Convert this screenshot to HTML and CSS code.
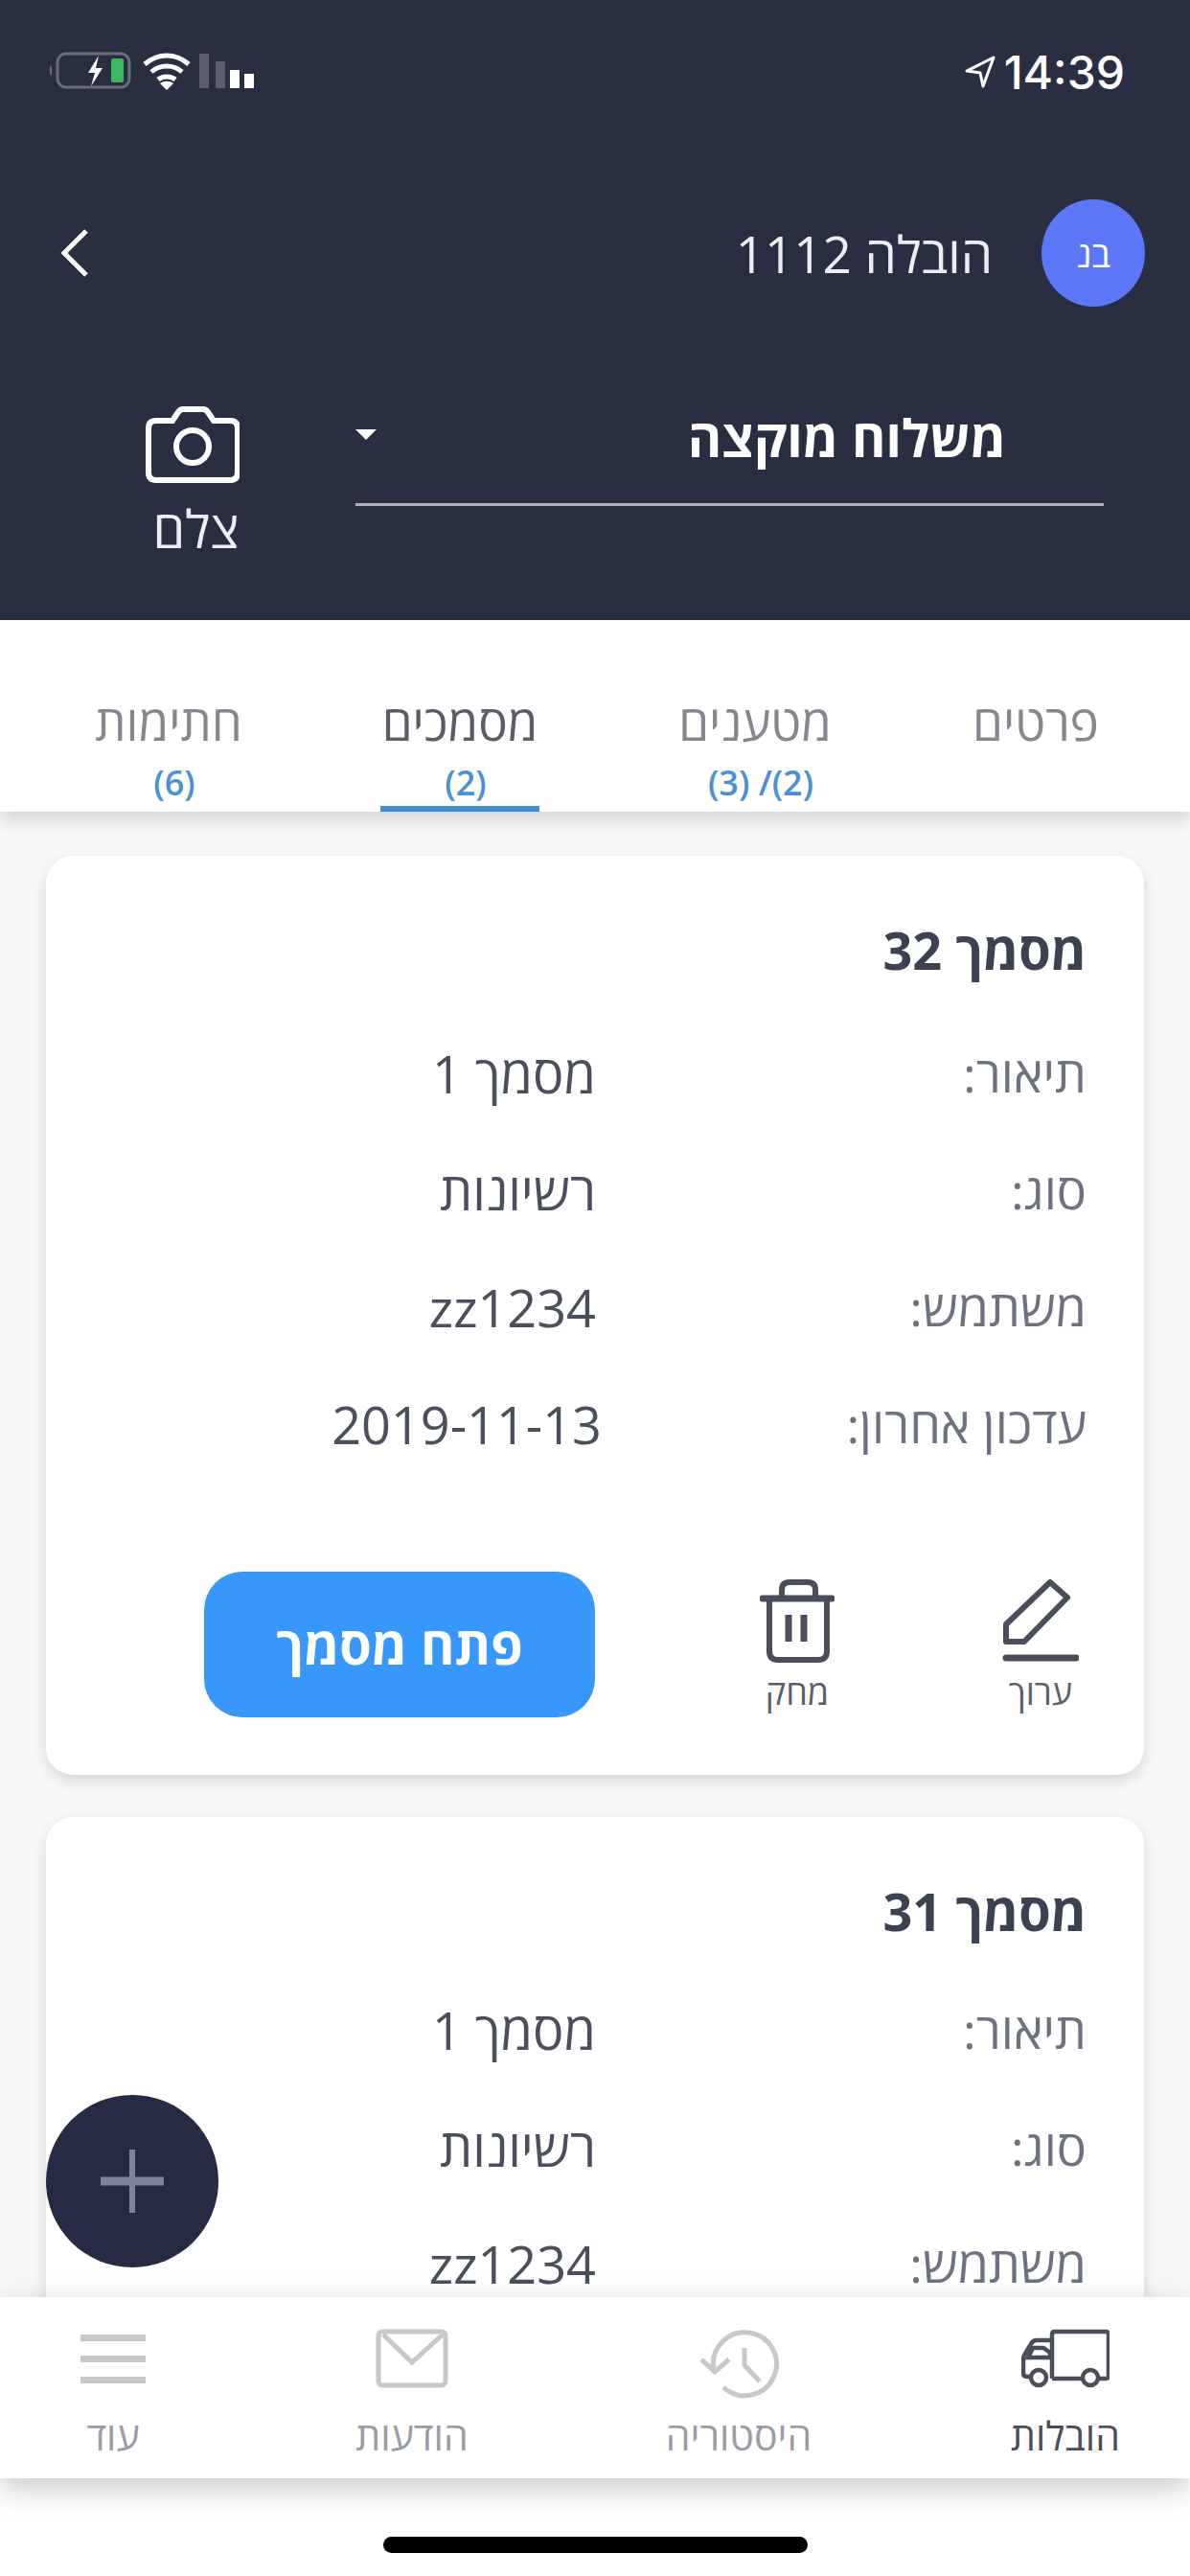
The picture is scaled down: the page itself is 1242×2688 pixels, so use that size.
FILE: index.html
```html
<!DOCTYPE html>
<html lang="he" dir="rtl">
  <head>
    <meta charset="utf-8">
    <link rel="stylesheet" href="styles.css">
    <title>הובלה 1112</title>
  </head>
  <body>
    <div class="screen">
      <header class="top">
        <div class="status">
          <div class="clock">
            <span>14:39</span>
            <svg width="34" height="36" viewBox="0 0 34 36"><path d="M31 3 3 17l14 2 3 14z" fill="none" stroke="#fff" stroke-width="3" stroke-linejoin="round"/></svg>
          </div>
          <svg class="status-icons" width="216" height="44" viewBox="0 0 216 44">
            <rect x="8" y="3" width="75" height="35" rx="9" fill="none" stroke="#686c7c" stroke-width="3"/>
            <path d="M2 15v11l-2-2v-7z" fill="#686c7c"/>
            <rect x="64" y="8" width="13" height="25" rx="2" fill="#3cb95c"/>
            <path d="M51 5 40 23h7l-4 14 12-19h-7z" fill="#fff"/>
            <path d="M99 14c14-12 32-12 46 0M106 22c9-8 23-8 32 0M113 30c5-4 13-4 18 0" fill="none" stroke="#fff" stroke-width="5"/>
            <path d="M122 41l-7-7c4-3 10-3 14 0z" fill="#fff"/>
            <rect x="156" y="3" width="10" height="36" fill="#5a5e6e"/>
            <rect x="173" y="11" width="10" height="28" fill="#5a5e6e"/>
            <rect x="188" y="20" width="10" height="19" fill="#fff"/>
            <rect x="203" y="24" width="10" height="15" fill="#fff"/>
          </svg>
        </div>
        <div class="title-row">
          <div class="avatar">בנ</div>
          <div class="title">הובלה 1112</div>
          <svg class="back" width="32" height="52" viewBox="0 0 32 52"><path d="M28 3 5 26l23 23" fill="none" stroke="#fff" stroke-width="5"/></svg>
        </div>
        <div class="select-row">
          <div class="select">
            <span class="select-text">משלוח מוקצה</span>
            <span class="select-arrow"></span>
          </div>
          <div class="camera">
            <svg width="98" height="80" viewBox="0 0 98 80"><path d="M3 23q0-8 8-8h17l6-9q2-3 5-3h21q3 0 5 3l6 9h17q8 0 8 8v46q0 8-8 8H11q-8 0-8-8z" fill="none" stroke="#fff" stroke-width="6"/><circle cx="49" cy="42" r="17" fill="none" stroke="#fff" stroke-width="6"/></svg>
            <span>צלם</span>
          </div>
        </div>
      </header>

      <nav class="tabs">
        <div class="tab"><span class="tab-name">פרטים</span></div>
        <div class="tab"><span class="tab-name">מטענים</span><span class="tab-count">(2)/ (3)</span></div>
        <div class="tab active"><span class="tab-name">מסמכים</span><span class="tab-count">(2)</span></div>
        <div class="tab"><span class="tab-name">חתימות</span><span class="tab-count">(6)</span></div>
      </nav>

      <main class="list">
        <section class="card">
          <h2>מסמך 32</h2>
          <div class="row"><span class="key">תיאור:</span><span class="val">מסמך 1</span></div>
          <div class="row"><span class="key">סוג:</span><span class="val">רשיונות</span></div>
          <div class="row"><span class="key">משתמש:</span><span class="val">zz1234</span></div>
          <div class="row"><span class="key">עדכון אחרון:</span><span class="val date">2019-11-13</span></div>
          <div class="actions">
            <div class="action edit">
              <svg width="80" height="88" viewBox="0 0 80 88"><path d="M50 3 68 19 23 65H4V47z" fill="none" stroke="#4a4e5a" stroke-width="6" stroke-linejoin="round"/><path d="M4 82h73" stroke="#4a4e5a" stroke-width="7" stroke-linecap="round"/></svg>
              <span>ערוך</span>
            </div>
            <div class="action trash">
              <svg width="78" height="88" viewBox="0 0 78 88"><path d="M3 20h72" stroke="#4a4e5a" stroke-width="7" stroke-linecap="round"/><path d="M23 18V11q0-8 8-8h19q8 0 8 8v7" fill="none" stroke="#4a4e5a" stroke-width="6"/><path d="M10 20v55q0 9 9 9h42q9 0 9-9V20" fill="none" stroke="#4a4e5a" stroke-width="6"/><path d="M30 37v28M46 37v28" stroke="#4a4e5a" stroke-width="7"/></svg>
              <span>מחק</span>
            </div>
            <button class="open">פתח מסמך</button>
          </div>
        </section>
        <section class="card short">
          <h2>מסמך 31</h2>
          <div class="row"><span class="key">תיאור:</span><span class="val">מסמך 1</span></div>
          <div class="row"><span class="key">סוג:</span><span class="val">רשיונות</span></div>
          <div class="row"><span class="key">משתמש:</span><span class="val">zz1234</span></div>
        </section>
      </main>

      <button class="fab">
        <svg width="66" height="66" viewBox="0 0 66 66"><path d="M0 33h66" stroke="#7d8499" stroke-width="9"/><path d="M33 0v66" stroke="#7d8499" stroke-width="6"/></svg>
      </button>

      <footer class="bottom">
        <div class="nav-item current">
          <div class="nav-icon"><svg width="92" height="62" viewBox="0 0 92 62"><g fill="none" stroke="#4a4e5a" stroke-width="4.5"><path d="M32 52V6q0-3 3-3h53q3 0 3 3v43q0 3-3 3h-8M64 52H32"/><circle cx="72" cy="51" r="8"/><circle cx="18" cy="51" r="8"/><path d="M10 50H6q-4 0-4-4V32q0-3 2-6l6-10q2-4 6-4h16"/><path d="M7 30l5-10h11l7 5v5z"/></g></svg></div>
          <span>הובלות</span>
        </div>
        <div class="nav-item">
          <div class="nav-icon"><svg width="84" height="74" viewBox="0 0 84 74"><g fill="none" stroke="#c8c8c8" stroke-width="5"><path d="M16 43A33 33 0 1 1 26 61"/><path d="M3 32l14 13 15-13"/><path d="M48 20v18l16 17"/></g></svg></div>
          <span>היסטוריה</span>
        </div>
        <div class="nav-item">
          <div class="nav-icon"><svg width="76" height="62" viewBox="0 0 76 62"><g fill="none" stroke="#c8c8c8" stroke-width="5"><rect x="3" y="3" width="70" height="56" rx="4"/><path d="M8 6l30 29L70 6"/></g></svg></div>
          <span>הודעות</span>
        </div>
        <div class="nav-item">
          <div class="nav-icon"><div class="burger"><i></i><i></i><i></i></div></div>
          <span>עוד</span>
        </div>
      </footer>

      <div class="home-area"><div class="home-bar"></div></div>
    </div>
  </body>
</html>
```

FILE: styles.css
```css
html, body {
  margin: 0;
  padding: 0;
}
body {
  font-family: "Open Sans", "Liberation Sans", sans-serif;
  background: #fff;
}
.screen {
  position: relative;
  width: 1242px;
  height: 2688px;
  overflow: hidden;
  display: flex;
  flex-direction: column;
}

/* header */
.top {
  background: #2a2e42;
  height: 647px;
  color: #fff;
  flex: none;
}
.status {
  height: 150px;
  display: flex;
  justify-content: space-between;
  align-items: center;
  padding: 0 68px 0 52px;
}
.clock {
  display: flex;
  align-items: center;
  gap: 8px;
  font-family: Inter, sans-serif;
  font-size: 48px;
  font-weight: 500;
}
.title-row {
  height: 116px;
  margin-top: 56px;
  padding: 0 47px 0 62px;
  display: flex;
  align-items: center;
}
.avatar {
  width: 108px;
  height: 112px;
  border-radius: 50%;
  background: #5b76f7;
  font-size: 38px;
  display: flex;
  align-items: center;
  justify-content: center;
}
.title {
  font-size: 53px;
  margin-right: 51px;
  color: #eceef2;
}
.back {
  margin-right: auto;
}
.select-row {
  margin-top: 75px;
  padding: 0 90px 0 152px;
  display: flex;
  justify-content: space-between;
  align-items: flex-start;
}
.select {
  width: 679px;
  height: 118px;
  padding-bottom: 10px;
  padding-right: 102px;
  border-bottom: 3px solid #b2b2bc;
  display: flex;
  justify-content: space-between;
  align-items: center;
}
.select-text {
  font-size: 54px;
  font-weight: 700;
}
.select-arrow {
  width: 0;
  height: 0;
  border-top: 11px solid #fff;
  border-left: 11px solid transparent;
  border-right: 11px solid transparent;
  margin-bottom: 6px;
}
.camera {
  display: flex;
  flex-direction: column;
  align-items: center;
  margin-top: 27px;
  font-size: 54px;
  line-height: 66px;
  gap: 14px;
  color: #eceef2;
}
.camera span {
  margin-left: 7px;
}

/* tabs */
.tabs {
  position: relative;
  z-index: 2;
  flex: none;
  height: 200px;
  padding: 0 15px 0 33px;
  display: grid;
  grid-template-columns: 292px 294px 322px 286px;
  background: #fff;
  box-shadow: 0 8px 16px rgba(0, 0, 0, 0.14);
}
.tab {
  display: flex;
  flex-direction: column;
  align-items: center;
  padding-top: 76px;
}
.tab-name {
  font-size: 51px;
  line-height: 60px;
  color: #85878f;
}
.tab-count {
  font-size: 36px;
  font-weight: 600;
  line-height: 40px;
  margin-top: 14px;
  margin-left: 12px;
  color: #4a90d2;
}
.tab.active {
  position: relative;
}
.tab.active .tab-name {
  color: #5b5d66;
}
.tab.active::after {
  content: "";
  position: absolute;
  bottom: 0;
  left: 50%;
  width: 166px;
  margin-left: -83px;
  height: 6px;
  background: #3f8fd8;
}

/* cards */
.list {
  flex: 1;
  min-height: 0;
  background: #f6f7f9;
  padding: 46px 48px 0;
}
.card {
  background: #fff;
  border-radius: 28px;
  box-shadow: 0 6px 14px rgba(0, 0, 0, 0.13);
  padding: 66px 60px 60px 62px;
  margin-bottom: 44px;
}
.card h2 {
  margin: 0 0 36px;
  font-size: 54px;
  line-height: 64px;
  font-weight: 700;
  color: #3d4252;
}
.card.short h2 {
  margin-bottom: 31px;
}
.row {
  height: 122px;
  display: flex;
  align-items: center;
  font-size: 52px;
  line-height: 1;
}
.key {
  width: 512px;
  color: #6d7280;
  flex: none;
}
.val {
  font-size: 54px;
  color: #4a4f5c;
}
.val.date {
  margin-right: -6px;
}
.actions {
  margin-top: 93px;
  padding-right: 8px;
  display: flex;
  align-items: flex-start;
}
.action {
  display: flex;
  flex-direction: column;
  align-items: center;
  font-size: 36px;
  line-height: 40px;
  color: #5a5e6a;
}
.action svg {
  display: block;
  margin-top: 8px;
}
.action span {
  margin-top: 10px;
}
.edit {
  width: 80px;
}
.trash {
  margin-right: 175px;
}
.open {
  margin-right: 172px;
  width: 408px;
  height: 152px;
  border: 0;
  border-radius: 40px;
  background: #3797fb;
  color: #fff;
  font-family: inherit;
  font-size: 54px;
  font-weight: 700;
}

/* floating button */
.fab {
  position: absolute;
  left: 48px;
  top: 2186px;
  width: 180px;
  height: 180px;
  border: 0;
  padding: 0;
  border-radius: 50%;
  background: #262a42;
  display: flex;
  align-items: center;
  justify-content: center;
  z-index: 3;
}

/* bottom nav */
.bottom {
  position: relative;
  z-index: 2;
  flex: none;
  height: 189px;
  background: #fff;
  box-shadow: 0 10px 30px rgba(0, 0, 0, 0.22);
  padding-right: 30px;
  display: flex;
  gap: 141px;
}
.nav-item {
  width: 200px;
  display: flex;
  flex-direction: column;
  align-items: center;
  font-size: 41px;
  color: #9a9ca3;
}
.nav-item:last-child {
  margin-right: -29px;
}
.nav-item span {
  line-height: 50px;
}
.nav-item.current {
  color: #4a4e5a;
}
.nav-icon {
  height: 86px;
  margin-top: 33px;
}
.burger {
  width: 68px;
  padding-top: 6px;
  display: flex;
  flex-direction: column;
  gap: 15px;
}
.burger i {
  display: block;
  height: 7px;
  background: #c8c8c8;
}
.home-area {
  flex: none;
  height: 102px;
  background: #fff;
  display: flex;
  justify-content: center;
  padding-top: 61px;
  box-sizing: border-box;
}
.home-bar {
  width: 443px;
  height: 17px;
  border-radius: 9px;
  background: #000;
}
```
